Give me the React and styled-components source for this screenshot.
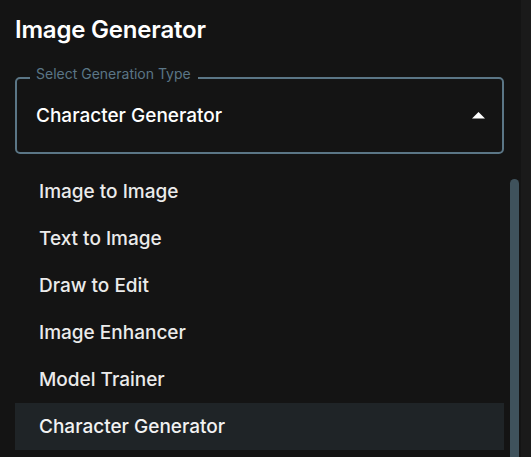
import React from "react";
import styled, { createGlobalStyle } from "styled-components";

const GlobalStyle = createGlobalStyle`
  html, body {
    margin: 0;
    padding: 0;
    background: #141414;
  }
  body {
    font-family: "Inter", "Liberation Sans", sans-serif;
    color: #ffffff;
  }
`;

const Page = styled.div`
  display: flex;
  height: 100vh;
  overflow: hidden;
`;

const Main = styled.div`
  flex: 1;
  display: flex;
  flex-direction: column;
  padding-left: 15px;
  min-width: 0;
`;

const PageTrack = styled.div`
  width: 10px;
  background: #1a1a1a;
`;

const Title = styled.h1`
  margin: 15px 0 33px;
  font-size: 24px;
  line-height: 29px;
  font-weight: 600;
  letter-spacing: -0.2px;
`;

const Field = styled.div`
  position: relative;
  display: flex;
  align-items: center;
  box-sizing: border-box;
  height: 77px;
  margin-right: 17px;
  padding: 0 17px 0 19px;
  border: 2px solid #5b7686;
  border-radius: 5px;
`;

const FieldLabel = styled.span`
  position: absolute;
  top: -14px;
  left: 13px;
  padding: 0 7px 0 6px;
  background: #141414;
  color: #5b7686;
  font-size: 14px;
  line-height: 17px;
`;

const Value = styled.div`
  flex: 1;
  font-size: 19px;
  font-weight: 500;
  line-height: 23px;
`;

const Menu = styled.div`
  flex: 1;
  display: flex;
  margin-top: 6px;
  min-height: 0;
`;

const List = styled.ul`
  flex: 1;
  margin: 0;
  padding: 8px 0 0;
  list-style: none;
`;

const Item = styled.li`
  display: flex;
  align-items: center;
  height: 47px;
  padding-left: 24px;
  font-size: 19px;
  font-weight: 500;
  color: ${(p) => (p.$active ? "#f2f2f2" : "#ebebeb")};
  background: ${(p) => (p.$active ? "#1f2427" : "transparent")};
`;

const ScrollTrack = styled.div`
  width: 17px;
  display: flex;
  flex-direction: column;
  padding-top: 19px;
`;

const Thumb = styled.div`
  flex: 1;
  width: 9px;
  margin-left: 6px;
  border-radius: 5px 5px 0 0;
  background: #3f525c;
`;

const Caret = () => (
  <svg width="13" height="7" viewBox="0 0 13 7">
    <path d="M0 6.5 L6.5 0 L13 6.5 Z" fill="#ffffff" />
  </svg>
);

const options = [
  "Image to Image",
  "Text to Image",
  "Draw to Edit",
  "Image Enhancer",
  "Model Trainer",
  "Character Generator",
];

export default function App() {
  const selected = "Character Generator";
  return (
    <>
      <GlobalStyle />
      <Page>
        <Main>
          <Title>Image Generator</Title>
          <Field>
            <FieldLabel>Select Generation Type</FieldLabel>
            <Value>{selected}</Value>
            <Caret />
          </Field>
          <Menu>
            <List>
              {options.map((o) => (
                <Item key={o} $active={o === selected}>
                  {o}
                </Item>
              ))}
            </List>
            <ScrollTrack>
              <Thumb />
            </ScrollTrack>
          </Menu>
        </Main>
        <PageTrack />
      </Page>
    </>
  );
}
